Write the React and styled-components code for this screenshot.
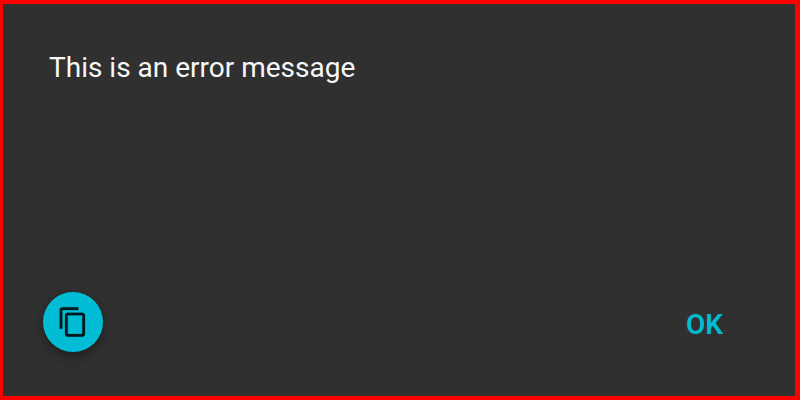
import React from "react";
import styled, { createGlobalStyle } from "styled-components";

const GlobalStyle = createGlobalStyle`
  body { margin: 0; background: #303030; }
  * { box-sizing: border-box; }
`;

const Dialog = styled.section`
  display: flex;
  flex-direction: column;
  justify-content: space-between;
  width: 800px;
  height: 400px;
  padding: 46px 42px 44px 40px;
  border: solid #ff0000;
  border-width: 4px 5px 4px 3px;
  background: #303030;
  font-family: Roboto, sans-serif;
`;

const Message = styled.p`
  margin: 0;
  padding-left: 6px;
  font-size: 28px;
  line-height: 36px;
  color: #f7f7f7;
`;

const Actions = styled.footer`
  display: flex;
  align-items: flex-end;
  justify-content: space-between;
`;

const CopyButton = styled.button`
  display: flex;
  align-items: center;
  justify-content: center;
  width: 60px;
  height: 60px;
  padding: 0;
  border: 0;
  border-radius: 50%;
  background: #00bcd4;
  color: #00181c;
  box-shadow: 0 3px 5px -1px rgba(0,0,0,.2), 0 6px 10px rgba(0,0,0,.14), 0 1px 18px rgba(0,0,0,.12);
`;

const CopyIcon = styled.svg`
  width: 32px;
  height: 32px;
  fill: currentColor;
  stroke: currentColor;
  stroke-width: 0.15;
`;

const OkButton = styled.button`
  height: 54px;
  padding: 0 30px;
  border: 0;
  background: transparent;
  color: #00bcd4;
  font: 600 28px/54px Roboto, sans-serif;
`;

export default function App() {
  return (
    <>
      <GlobalStyle />
      <Dialog>
        <Message>This is an error message</Message>
        <Actions>
          <CopyButton aria-label="Copy">
            <CopyIcon viewBox="0 0 24 24">
              <path d="M16 1H4c-1.1 0-2 .9-2 2v14h2V3h12V1zm3 4H8c-1.1 0-2 .9-2 2v14c0 1.1.9 2 2 2h11c1.1 0 2-.9 2-2V7c0-1.1-.9-2-2-2zm0 16H8V7h11v14z" />
            </CopyIcon>
          </CopyButton>
          <OkButton>OK</OkButton>
        </Actions>
      </Dialog>
    </>
  );
}
